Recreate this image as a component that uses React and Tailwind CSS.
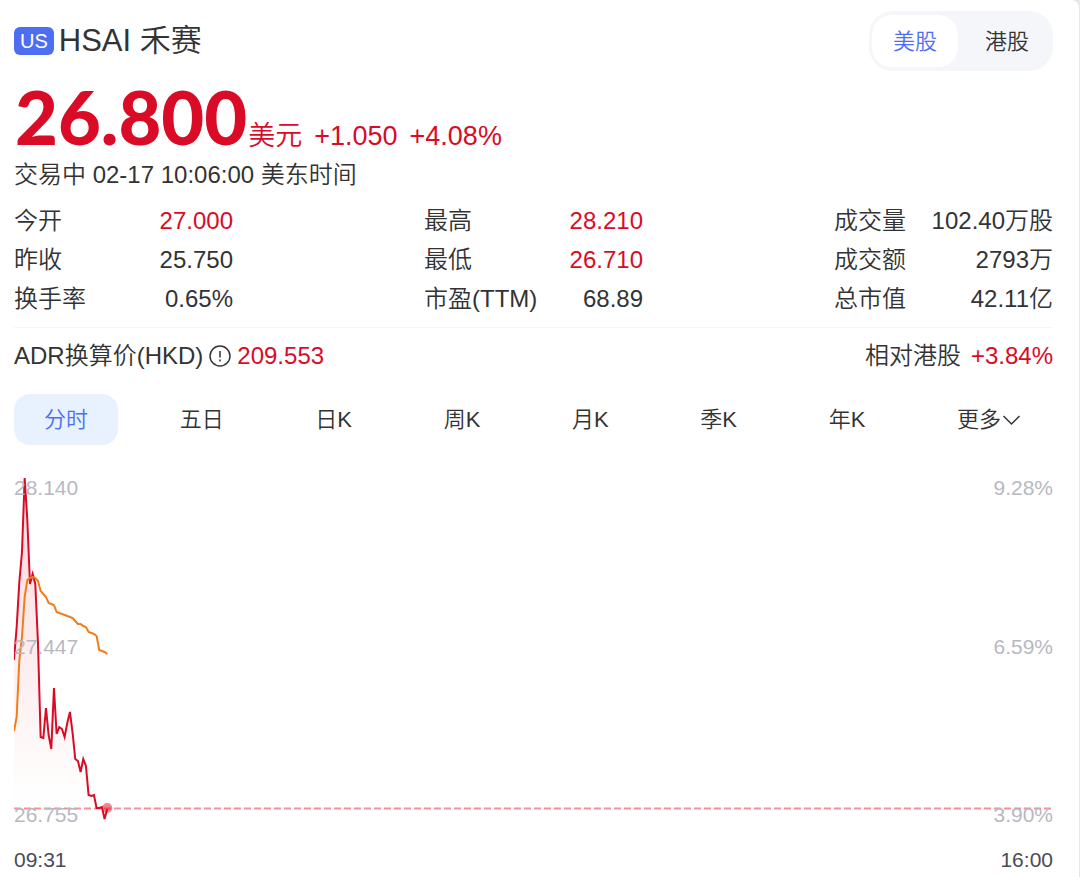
// src/App.jsx
import { useState } from "react";
import clsx from "clsx";

const MARKETS = ["美股", "港股"];
const PERIODS = ["分时", "五日", "日K", "周K", "月K", "季K", "年K"];

const STATS = [
  [
    { label: "今开", value: "27.000", up: true },
    { label: "昨收", value: "25.750" },
    { label: "换手率", value: "0.65%" },
  ],
  [
    { label: "最高", value: "28.210", up: true },
    { label: "最低", value: "26.710", up: true },
    { label: "市盈(TTM)", value: "68.89" },
  ],
  [
    { label: "成交量", value: "102.40万股" },
    { label: "成交额", value: "2793万" },
    { label: "总市值", value: "42.11亿" },
  ],
];

// one point per minute, y measured from the top of the chart
const SESSION_MINUTES = 390;
const PRICE = [
  190, 157, 112, 82, 8, 50, 114, 104, 114, 173, 267, 268, 238, 265, 279, 218,
  264, 257, 259, 267, 253, 242, 263, 289, 291, 302, 289, 296, 325, 326, 325,
  338, 338, 337, 349, 339,
];
const AVERAGE = [
  261, 247, 190, 167, 127, 110, 108, 107, 108, 111, 121, 124, 127, 133, 134,
  135, 142, 143, 144, 145, 146, 147, 148, 151, 154, 154, 156, 157, 162, 163,
  164, 166, 180, 181, 182, 184,
];
const BASELINE = 338;

const toPoints = (series) => series.map((y, i) => `${i},${y}`).join(" ");

const MarketSwitch = () => {
  const [market, setMarket] = useState("美股");

  return (
    <div className="flex gap-1.5 rounded-3xl bg-[#f4f6fa] px-[3px] py-1">
      {MARKETS.map((name) => (
        <button
          key={name}
          type="button"
          onClick={() => setMarket(name)}
          className={clsx(
            "h-[52px] w-[86px] rounded-[20px] pt-0.5 text-[22px]",
            market === name ? "bg-white text-[#4e6ef2]" : "text-[#333]"
          )}
        >
          {name}
        </button>
      ))}
    </div>
  );
};

const StatColumn = ({ items }) => (
  <dl className="w-[219px]">
    {items.map(({ label, value, up }) => (
      <div
        key={label}
        className="flex justify-between whitespace-nowrap leading-[39px]"
      >
        <dt>{label}</dt>
        <dd className={up ? "text-[#d90b26]" : ""}>{value}</dd>
      </div>
    ))}
  </dl>
);

const PeriodTabs = () => {
  const [period, setPeriod] = useState("分时");

  return (
    <nav className="mt-5 flex justify-between text-[22px]">
      {PERIODS.map((name) => (
        <button
          key={name}
          type="button"
          onClick={() => setPeriod(name)}
          className={clsx(
            "h-[51px] rounded-2xl px-[30px]",
            period === name && "bg-[#e8f2ff] text-[#4e6ef2]"
          )}
        >
          {name}
        </button>
      ))}
      <button type="button" className="flex items-center pr-8 pl-[30px]">
        更多
        <svg width="20" height="20" viewBox="0 0 20 20" fill="none">
          <path d="M2.500 6l8 8 8-8" stroke="currentColor" strokeWidth="1.500" />
        </svg>
      </button>
    </nav>
  );
};

const MinuteChart = () => {
  const last = PRICE.length - 1;

  return (
    <div className="relative mt-[25px] h-[360px] text-[21px] leading-6 text-[#b7b9c1]">
      <svg className="block h-full w-full">
        <defs>
          <linearGradient id="area" x1="0" y1="0" x2="0" y2="1">
            <stop offset="0" stopColor="#d90b26" stopOpacity="0.16" />
            <stop offset="1" stopColor="#d90b26" stopOpacity="0" />
          </linearGradient>
        </defs>
        <line
          x1="0"
          x2="100%"
          y1="338.500"
          y2="338.500"
          stroke="#f98f94"
          strokeWidth="2"
          strokeDasharray="7 3"
        />
        <svg
          width="100%"
          height="360"
          viewBox={`0 0 ${SESSION_MINUTES} 360`}
          preserveAspectRatio="none"
        >
          <polygon
            points={`0,${BASELINE} ${toPoints(PRICE.slice(0, 32))}`}
            fill="url(#area)"
          />
          <polyline
            points={toPoints(PRICE)}
            fill="none"
            stroke="#d90b26"
            strokeWidth="2"
            vectorEffect="non-scaling-stroke"
          />
          <polyline
            points={toPoints(AVERAGE)}
            fill="none"
            stroke="#f07d1a"
            strokeWidth="2"
            vectorEffect="non-scaling-stroke"
          />
        </svg>
        <circle
          cx={`${(last / SESSION_MINUTES) * 100}%`}
          cy={BASELINE}
          r="5"
          fill="#d90b26"
          fillOpacity="0.5"
        />
      </svg>
      <div className="absolute inset-x-0 top-1.5 flex justify-between">
        <span>28.140</span>
        <span>9.28%</span>
      </div>
      <div className="absolute inset-x-0 top-[165px] flex justify-between">
        <span>27.447</span>
        <span>6.59%</span>
      </div>
      <div className="absolute inset-x-0 top-[333px] flex justify-between">
        <span>26.755</span>
        <span>3.90%</span>
      </div>
    </div>
  );
};

const App = () => {
  return (
    <div className="bg-[#e4e7f0] font-['Liberation_Sans','Noto_Sans_CJK_SC',sans-serif] font-[350]">
      <main className="mr-px min-h-screen rounded-tr-lg bg-white pt-[11px] pr-[26px] pl-3.5 text-2xl text-[#333]">
        <header className="flex items-center justify-between">
          <h1 className="flex items-center gap-[5px] text-[31px] leading-10">
            <span className="rounded-md bg-[#4e6ef2] px-1.5 text-xl leading-7 text-white">
              US
            </span>
            HSAI 禾赛
          </h1>
          <MarketSwitch />
        </header>

        <div className="flex h-[86px] items-baseline pt-[9px] text-[27px] leading-none text-[#d90b26]">
          <span className="ml-px font-['Lato'] text-[74px] leading-none font-black">
            26.800
          </span>
          <span className="ml-px">美元</span>
          <span className="ml-3">+1.050</span>
          <span className="ml-3">+4.08%</span>
        </div>
        <p className="leading-9">交易中 02-17 10:06:00 美东时间</p>

        <section className="mt-2 flex justify-between border-b border-[#f5f5f6] pb-[9px]">
          {STATS.map((items) => (
            <StatColumn key={items[0].label} items={items} />
          ))}
        </section>

        <section className="mt-2.5 flex justify-between leading-9">
          <div className="flex items-center">
            ADR换算价(HKD)
            <svg
              className="mx-1.5"
              width="22"
              height="22"
              viewBox="0 0 22 22"
              fill="none"
              stroke="currentColor"
              strokeWidth="1.500"
            >
              <circle cx="11" cy="11" r="10" />
              <path d="M11 6v6.500M11 14.500v2" />
            </svg>
            <span className="text-[#d90b26]">209.553</span>
          </div>
          <div>
            相对港股<span className="ml-2.5 text-[#d90b26]">+3.84%</span>
          </div>
        </section>

        <PeriodTabs />
        <MinuteChart />

        <div className="mt-[18px] flex justify-between text-[21px] leading-6 text-[#4a4b57]">
          <span>09:31</span>
          <span>16:00</span>
        </div>
      </main>
    </div>
  );
};

export default App;
